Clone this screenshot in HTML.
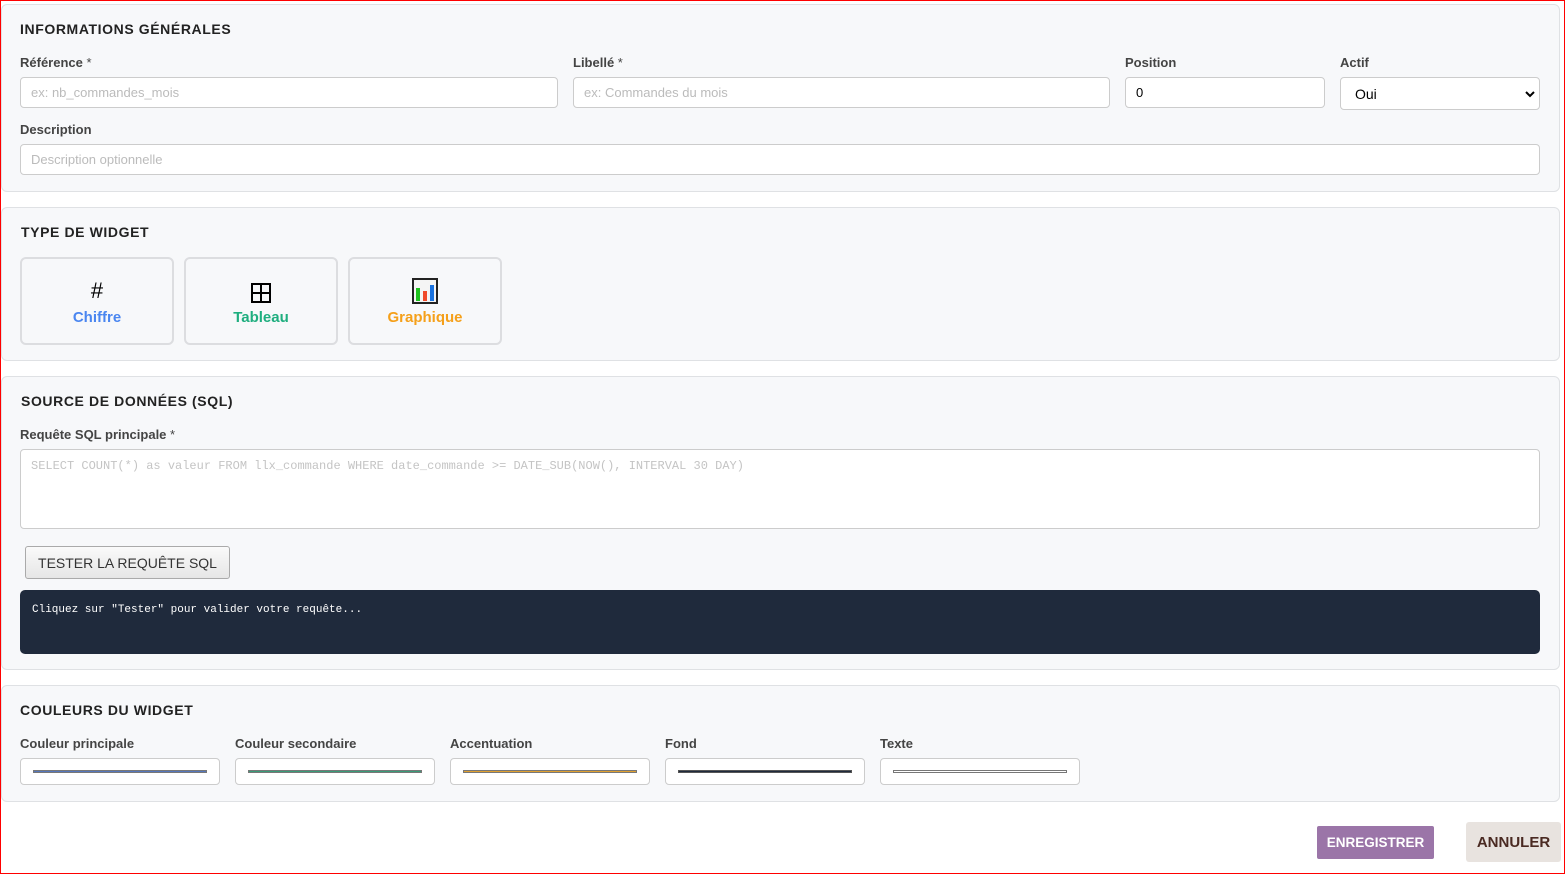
<!DOCTYPE html>
<html><head><meta charset="utf-8"><style>
*{box-sizing:border-box;margin:0;padding:0}
html,body{width:1565px;height:874px;overflow:hidden;background:#fff;font-family:"Liberation Sans",sans-serif}
.frame{position:absolute;left:0;top:0;width:1565px;height:874px;border:1px solid #f00}
.sec{position:absolute;left:1px;width:1559px;background:#f7f8fa;border:1px solid #dfe1e4;border-radius:6px}
.h{position:absolute;font-size:14px;font-weight:bold;letter-spacing:0.6px;color:#222}
.lbl{position:absolute;font-size:13px;font-weight:bold;color:#444}
.lbl span{font-weight:normal}
.inp{position:absolute;background:#fff;border:1px solid #ccc;border-radius:4px;font-size:13px;color:#bbb;padding-left:10px;display:flex;align-items:center}
.card{position:absolute;top:257px;width:154px;height:88px;border:2px solid #dcdde0;border-radius:6px;background:#f7f8fa;text-align:center;font-weight:bold;font-size:15px}
.sw{position:absolute;top:758px;width:200px;height:27px;background:#fff;border:1px solid #ccc;border-radius:4px}
.sw i{position:absolute;left:12px;right:12px;top:11px;height:3px}
</style></head><body>
<div class="frame"></div>

<div class="sec" style="top:4px;height:188px"></div>
<div class="h" style="left:20px;top:21px">INFORMATIONS GÉNÉRALES</div>
<div class="lbl" style="left:20px;top:55px">Référence <span>*</span></div>
<div class="inp" style="left:20px;top:77px;width:538px;height:31px">ex: nb_commandes_mois</div>
<div class="lbl" style="left:573px;top:55px">Libellé <span>*</span></div>
<div class="inp" style="left:573px;top:77px;width:537px;height:31px">ex: Commandes du mois</div>
<div class="lbl" style="left:1125px;top:55px">Position</div>
<div class="inp" style="left:1125px;top:77px;width:200px;height:31px;color:#000">0</div>
<div class="lbl" style="left:1340px;top:55px">Actif</div>
<div class="inp" style="left:1340px;top:77px;width:200px;height:33px;color:#000;font-size:14px;padding-left:14px">Oui
<svg style="position:absolute;right:4px;top:12px" width="10" height="8" viewBox="0 0 10 8"><path d="M1 2l4 4 4-4" stroke="#000" stroke-width="2" fill="none"/></svg></div>
<div class="lbl" style="left:20px;top:122px">Description</div>
<div class="inp" style="left:20px;top:144px;width:1520px;height:31px">Description optionnelle</div>

<div class="sec" style="top:207px;height:154px"></div>
<div class="h" style="left:21px;top:224px">TYPE DE WIDGET</div>
<div class="card" style="left:20px"><div style="font-size:22px;color:#000;margin-top:20px;line-height:24px;font-weight:normal">#</div><div style="color:#4a86f0;margin-top:6px">Chiffre</div></div>
<div class="card" style="left:184px"><svg style="margin-top:24px" width="20" height="20" viewBox="0 0 20 20"><rect x="1" y="1" width="18" height="18" fill="none" stroke="#000" stroke-width="2"/><path d="M10 1v18M1 10h18" stroke="#000" stroke-width="2"/></svg><div style="color:#1fae7f;margin-top:2px">Tableau</div></div>
<div class="card" style="left:348px"><svg style="margin-top:19px" width="26" height="26" viewBox="0 0 26 26"><rect x="1" y="1" width="24" height="24" fill="#f4f4f4" stroke="#222" stroke-width="2"/><rect x="4" y="10" width="4" height="13" fill="#1ec31e"/><rect x="11" y="13" width="4" height="10" fill="#f04a2a"/><rect x="18" y="7" width="4" height="16" fill="#1a73e0"/></svg><div style="color:#f5a01a;margin-top:1px">Graphique</div></div>

<div class="sec" style="top:376px;height:294px"></div>
<div class="h" style="left:21px;top:393px">SOURCE DE DONNÉES (SQL)</div>
<div class="lbl" style="left:20px;top:427px">Requête SQL principale <span>*</span></div>
<div class="inp" style="left:20px;top:449px;width:1520px;height:80px;align-items:flex-start;padding-top:9px;font-family:'Liberation Mono',monospace;font-size:12px;color:#c4c4c4">SELECT COUNT(*) as valeur FROM llx_commande WHERE date_commande &gt;= DATE_SUB(NOW(), INTERVAL 30 DAY)</div>
<div style="position:absolute;left:25px;top:546px;width:205px;height:33px;border:1px solid #aaa;border-radius:3px;background:linear-gradient(#fafafa,#e6e6e6);font-size:14px;color:#333;display:flex;align-items:center;justify-content:center">TESTER LA REQUÊTE SQL</div>
<div style="position:absolute;left:20px;top:590px;width:1520px;height:64px;background:#1f2a3c;border-radius:5px;color:#fff;font-family:'Liberation Mono',monospace;font-size:11px;padding:14px 12px">Cliquez sur "Tester" pour valider votre requête...</div>

<div class="sec" style="top:685px;height:117px"></div>
<div class="h" style="left:20px;top:702px">COULEURS DU WIDGET</div>
<div class="lbl" style="left:20px;top:736px">Couleur principale</div>
<div class="lbl" style="left:235px;top:736px">Couleur secondaire</div>
<div class="lbl" style="left:450px;top:736px">Accentuation</div>
<div class="lbl" style="left:665px;top:736px">Fond</div>
<div class="lbl" style="left:880px;top:736px">Texte</div>
<div class="sw" style="left:20px"><i style="background:#5577bb;border:1px solid #777"></i></div>
<div class="sw" style="left:235px"><i style="background:#3a9a78;border:1px solid #777"></i></div>
<div class="sw" style="left:450px"><i style="background:#e0a030;border:1px solid #777"></i></div>
<div class="sw" style="left:665px"><i style="background:#1f2a3c;border:1px solid #555"></i></div>
<div class="sw" style="left:880px"><i style="background:#fff;border:1px solid #777"></i></div>

<div style="position:absolute;left:1317px;top:826px;width:117px;height:33px;background:#9b75a8;border-radius:2px;color:#fff;font-weight:bold;font-size:13.5px;display:flex;align-items:center;justify-content:center">ENREGISTRER</div>
<div style="position:absolute;left:1466px;top:822px;width:95px;height:40px;background:#e8e3df;border-radius:3px;color:#4a2a22;font-weight:bold;font-size:15px;display:flex;align-items:center;justify-content:center">ANNULER</div>
</body></html>
